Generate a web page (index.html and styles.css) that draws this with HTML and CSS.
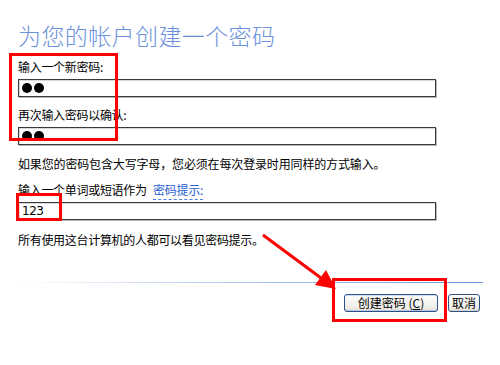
FILE: index.html
```html
<!DOCTYPE html>
<html lang="zh-CN">

<head>
    <meta charset="UTF-8">
    <title>创建密码</title>
    <link rel="stylesheet" href="styles.css">
</head>

<body>
    <div class="page">
        <h1 class="title">为您的帐户创建一个密码</h1>

        <div class="label">输入一个新密码:</div>
        <div class="field"><span class="dot"></span><span class="dot"></span></div>

        <div class="label gap">再次输入密码以确认:</div>
        <div class="field"><span class="dot"></span><span class="dot"></span></div>

        <p class="note">如果您的密码包含大写字母，您必须在每次登录时用同样的方式输入。</p>

        <div class="label gap">输入一个单词或短语作为 <a class="hint-link">密码提示:</a></div>
        <div class="field">123</div>

        <p class="note low">所有使用这台计算机的人都可以看见密码提示。</p>

        <div class="separator"></div>

        <div class="buttons">
            <button class="btn wide">创建密码 (<u>C</u>)</button>
            <button class="btn">取消</button>
        </div>

        <!-- annotation marks drawn over the dialog -->
        <div class="mark mark-fields"></div>
        <div class="mark mark-hint"></div>
        <div class="mark mark-button"></div>
        <svg class="arrow" width="500" height="365" viewBox="0 0 500 365">
            <line x1="263" y1="235" x2="321" y2="278" stroke="#f00" stroke-width="3" />
            <polygon points="336,289 315,285 326,270" fill="#f00" />
        </svg>
    </div>
</body>

</html>
```

FILE: styles.css
```css
body {
    margin: 0;
    padding: 0;
    background-color: #fff;
    font-family: "Noto Sans CJK SC", "DejaVu Sans", sans-serif;
    color: #000;
}

.page {
    position: relative;
    width: 500px;
    height: 365px;
    padding: 20px 17px 0 18px;
    box-sizing: border-box;
    overflow: hidden;
}

.title {
    margin: 0;
    font-size: 23px;
    line-height: 30px;
    font-weight: 300;
    color: #6b91dc;
    letter-spacing: 0.4px;
}

.label {
    margin-top: 9px;
    font-size: 12px;
    line-height: 16px;
    letter-spacing: -0.3px;
}

.label.gap {
    margin-top: 10px;
}

.hint-link {
    color: #2a62d0;
    margin-left: 4px;
    padding-bottom: 1px;
    border-bottom: 1px dashed #4a7fe0;
}

.field {
    margin-top: 4px;
    width: 418px;
    height: 18px;
    box-sizing: border-box;
    border: 1px solid #3a3a3a;
    box-shadow: 1px 1px 0 #b5b5b5, inset 1px 1px 0 #d8d8d8;
    display: flex;
    align-items: center;
    padding-left: 3px;
    gap: 2px;
    font-size: 12px;
    font-family: "DejaVu Sans", sans-serif;
    letter-spacing: -0.5px;
}

.dot {
    width: 10px;
    height: 10px;
    border-radius: 50%;
    background-color: #000;
}

.note {
    margin: 11px 0 0;
    font-size: 12px;
    line-height: 16px;
    letter-spacing: -0.15px;
}

.note.low {
    margin-top: 12px;
    letter-spacing: -0.3px;
}

.separator {
    margin-top: 34px;
    margin-left: 2px;
    height: 1px;
    background: linear-gradient(to right, #ffffff, #b8cdf2 40%, #6a96e6);
}

.buttons {
    margin-top: 11px;
    display: flex;
    justify-content: flex-end;
    gap: 10px;
    padding-right: 3px;
}

.btn {
    height: 18px;
    min-width: 32px;
    padding: 0 3px;
    border: 1px solid #2c4f86;
    border-radius: 3px;
    background: linear-gradient(#ffffff, #ecebe6 85%, #d6d0c5);
    font-family: "Noto Sans CJK SC", sans-serif;
    font-size: 12px;
    line-height: 14px;
    color: #000;
}

.btn.wide {
    width: 94px;
    box-shadow: inset 0 -1px 0 #b9c9ea, inset 0 1px 0 #cfe0fa;
}

.mark {
    position: absolute;
    border: 3px solid #f00;
}

.mark-fields {
    left: 9px;
    top: 53px;
    width: 103px;
    height: 82px;
}

.mark-hint {
    left: 16px;
    top: 193px;
    width: 40px;
    height: 22px;
}

.mark-button {
    left: 332px;
    top: 278px;
    width: 109px;
    height: 38px;
}

.arrow {
    position: absolute;
    left: 0;
    top: 0;
}
```
